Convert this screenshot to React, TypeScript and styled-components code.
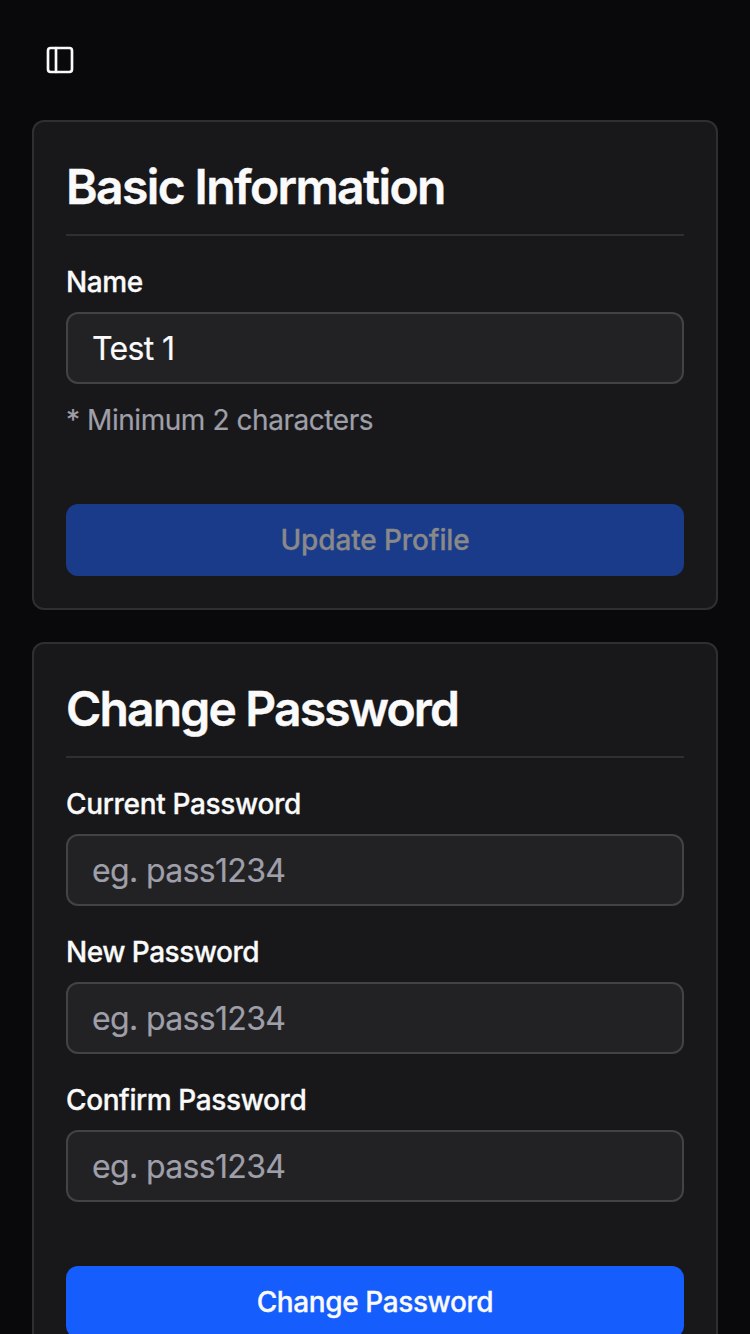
import React from "react";
import styled, { createGlobalStyle } from "styled-components";

const Global = createGlobalStyle`
  *, *::before, *::after { box-sizing: border-box; }
  html, body { margin: 0; background: #09090b; }
  body { font-family: Inter, "Liberation Sans", sans-serif; color: #fafafa; -webkit-font-smoothing: antialiased; }
`;

const Page = styled.main`
  display: flex;
  flex-direction: column;
  height: 100vh;
  overflow: hidden;
  padding: 32px 32px 0;
`;

const MenuButton = styled.button`
  display: flex;
  flex-shrink: 0;
  align-items: center;
  justify-content: center;
  width: 56px;
  height: 56px;
  margin-bottom: 32px;
  padding: 0;
  border: 0;
  background: transparent;
  color: #fafafa;
`;

const Card = styled.section`
  display: flex;
  flex-direction: column;
  flex-shrink: 0;
  padding: 32px;
  margin-bottom: 32px;
  border: 2px solid #2f2f32;
  border-radius: 12px;
  background: #18181b;
`;

const Title = styled.h2<{ $spacing: number }>`
  margin: 0 0 32px;
  height: 82px;
  padding-top: 1px;
  border-bottom: 2px solid #2f2f32;
  font-size: 48px;
  line-height: 64px;
  font-weight: 600;
  letter-spacing: ${(p) => p.$spacing}px;
  white-space: nowrap;
  -webkit-text-stroke: 0.4px currentColor;
`;

const Field = styled.div`
  display: flex;
  flex-direction: column;
  margin-bottom: 32px;
`;

const Label = styled.label<{ $spacing: number }>`
  margin-bottom: 16px;
  font-size: 28px;
  line-height: 28px;
  font-weight: 500;
  letter-spacing: ${(p) => p.$spacing}px;
  -webkit-text-stroke: 0.3px currentColor;
`;

const Input = styled.input`
  width: 100%;
  height: 72px;
  padding: 1px 24px 0;
  border: 2px solid #434346;
  border-radius: 12px;
  outline: none;
  background: #222225;
  color: #fafafa;
  font: 400 32px/48px Inter, "Liberation Sans", sans-serif;
  letter-spacing: -0.65px;
  -webkit-text-stroke: 0.2px currentColor;
  &::placeholder { color: #9f9fa9; opacity: 1; }
`;

const Hint = styled.p`
  margin: 16px 0 0;
  color: #9f9fa9;
  font-size: 28px;
  line-height: 40px;
  letter-spacing: -0.44px;
  -webkit-text-stroke: 0.2px currentColor;
`;

const Submit = styled.button<{ $spacing: number }>`
  height: 72px;
  margin-top: 32px;
  padding: 0;
  border: 0;
  border-radius: 12px;
  background: #155dfc;
  color: #fafafa;
  font: 500 28px/40px Inter, "Liberation Sans", sans-serif;
  letter-spacing: ${(p) => p.$spacing}px;
  -webkit-text-stroke: 0.3px currentColor;
  &:disabled { background: #1a3b89; color: #898989; }
`;

const passwordFields = [
  { label: "Current Password", spacing: -0.33 },
  { label: "New Password", spacing: -0.5 },
  { label: "Confirm Password", spacing: -0.4 },
];

export default function App() {
  return (
    <>
      <Global />
      <Page>
        <MenuButton aria-label="Toggle sidebar">
          <svg width="32" height="32" viewBox="0 0 24 24" fill="none" stroke="currentColor" strokeWidth="2" strokeLinecap="round" strokeLinejoin="round">
            <rect width="18" height="18" x="3" y="3" rx="2" />
            <path d="M9 3v18" />
          </svg>
        </MenuButton>
        <Card>
          <Title $spacing={-1.6}>Basic Information</Title>
          <Field>
            <Label htmlFor="name" $spacing={-0.4}>Name</Label>
            <Input id="name" defaultValue="Test 1" />
            <Hint>* Minimum 2 characters</Hint>
          </Field>
          <Submit disabled $spacing={-0.12}>Update Profile</Submit>
        </Card>
        <Card>
          <Title $spacing={-1.85}>Change Password</Title>
          {passwordFields.map(({ label, spacing }) => (
            <Field key={label}>
              <Label htmlFor={label} $spacing={spacing}>{label}</Label>
              <Input id={label} type="password" placeholder="eg. pass1234" />
            </Field>
          ))}
          <Submit $spacing={-0.4}>Change Password</Submit>
        </Card>
      </Page>
    </>
  );
}
